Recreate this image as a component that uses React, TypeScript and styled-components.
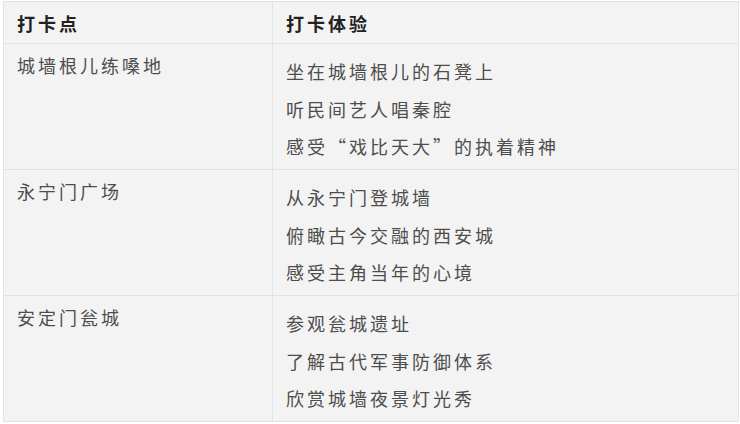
import React from 'react'
import styled, { createGlobalStyle } from 'styled-components'

interface Spot {
    name: string,
    items: string[]
}

const spots: Spot[] = [
    { name: '城墙根儿练嗓地', items: ['坐在城墙根儿的石凳上', '听民间艺人唱秦腔', '感受“戏比天大”的执着精神'] },
    { name: '永宁门广场', items: ['从永宁门登城墙', '俯瞰古今交融的西安城', '感受主角当年的心境'] },
    { name: '安定门瓮城', items: ['参观瓮城遗址', '了解古代军事防御体系', '欣赏城墙夜景灯光秀'] },
]

const App = () => {
    return (
        <>
            <GlobalStyle />
            <Page>
                <Table>
                    <thead>
                        <tr>
                            <Head>打卡点</Head>
                            <Head>打卡体验</Head>
                        </tr>
                    </thead>
                    <tbody>
                        {spots.map(spot => (
                            <tr key={spot.name}>
                                <NameCell>{spot.name}</NameCell>
                                <ListCell>
                                    <List>
                                        {spot.items.map(item => (
                                            <Line key={item}>{item}</Line>
                                        ))}
                                    </List>
                                </ListCell>
                            </tr>
                        ))}
                    </tbody>
                </Table>
            </Page>
        </>
    )
}

export default App

const GlobalStyle = createGlobalStyle`
    html, body {
        margin: 0;
        padding: 0;
        background: #ffffff;
    }
    body {
        font-family: "Noto Sans CJK SC", "Noto Sans", sans-serif;
    }
`

const Page = styled.div`
    width: 740px;
    height: 424px;
    padding: 1px 1px 0 3px;
    box-sizing: border-box;
    background: #ffffff;
`

const Table = styled.table`
    width: 736px;
    border-collapse: collapse;
    background: #f3f3f3;
    border: 1px solid #e2e2e2;
    table-layout: fixed;
`

const Head = styled.th`
    height: 42px;
    padding: 0 13px;
    box-sizing: border-box;
    text-align: left;
    font-size: 18px;
    font-weight: 700;
    letter-spacing: 3px;
    color: #222222;
    border: 1px solid #e2e2e2;
    &:first-child {
        width: 269px;
    }
`

const NameCell = styled.td`
    vertical-align: top;
    padding: 9px 13px 0;
    height: 125px;
    box-sizing: border-box;
    font-size: 18px;
    line-height: 24px;
    letter-spacing: 3px;
    color: #4d4d4d;
    border: 1px solid #e2e2e2;
`

const ListCell = styled.td`
    vertical-align: top;
    padding: 15px 13px 11px;
    box-sizing: border-box;
    border: 1px solid #e2e2e2;
`

const List = styled.div`
    display: flex;
    flex-direction: column;
    gap: 13.5px;
`

const Line = styled.p`
    margin: 0;
    font-size: 18px;
    line-height: 24px;
    letter-spacing: 3px;
    color: #4d4d4d;
`
